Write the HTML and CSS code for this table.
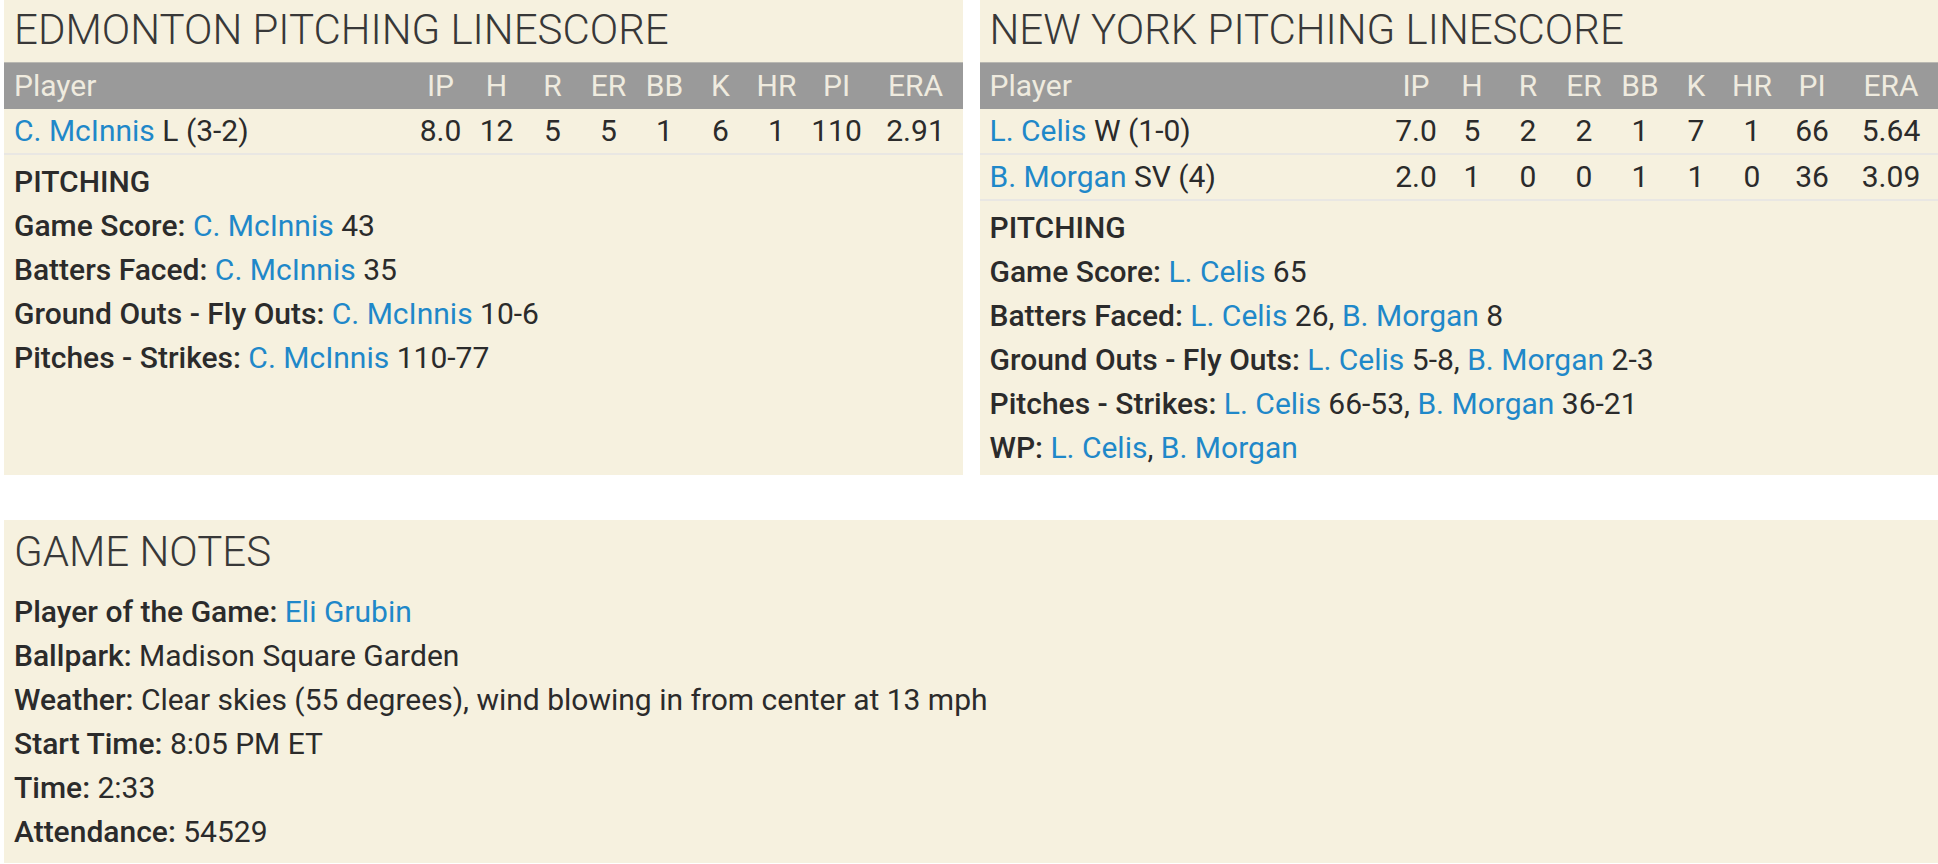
FILE: index.html
```html
<!DOCTYPE html>
<html lang="en">
<head>
    <meta charset="UTF-8">
    <meta name="viewport" content="width=device-width, initial-scale=1.0">
    <title>Box Score - Pitching</title>
    <link rel="stylesheet" href="styles.css">
</head>
<body>
    <div class="page">
        <div class="linescores">
            <section class="panel">
                <h2 class="panel-title">EDMONTON PITCHING LINESCORE</h2>
                <table class="linescore">
                    <thead>
                        <tr>
                            <th class="player">Player</th>
                            <th class="stat">IP</th>
                            <th class="stat">H</th>
                            <th class="stat">R</th>
                            <th class="stat">ER</th>
                            <th class="stat">BB</th>
                            <th class="stat">K</th>
                            <th class="stat">HR</th>
                            <th class="stat pi">PI</th>
                            <th class="stat era">ERA</th>
                        </tr>
                    </thead>
                    <tbody>
                        <tr>
                            <td class="player"><a href="#">C. McInnis</a> L (3-2)</td>
                            <td>8.0</td><td>12</td><td>5</td><td>5</td><td>1</td><td>6</td><td>1</td><td>110</td><td>2.91</td>
                        </tr>
                    </tbody>
                </table>
                <div class="details">
                    <h3>PITCHING</h3>
                    <p><b>Game Score:</b> <a href="#">C. McInnis</a> 43</p>
                    <p><b>Batters Faced:</b> <a href="#">C. McInnis</a> 35</p>
                    <p><b>Ground Outs - Fly Outs:</b> <a href="#">C. McInnis</a> 10-6</p>
                    <p><b>Pitches - Strikes:</b> <a href="#">C. McInnis</a> 110-77</p>
                </div>
            </section>

            <section class="panel">
                <h2 class="panel-title">NEW YORK PITCHING LINESCORE</h2>
                <table class="linescore">
                    <thead>
                        <tr>
                            <th class="player">Player</th>
                            <th class="stat">IP</th>
                            <th class="stat">H</th>
                            <th class="stat">R</th>
                            <th class="stat">ER</th>
                            <th class="stat">BB</th>
                            <th class="stat">K</th>
                            <th class="stat">HR</th>
                            <th class="stat pi">PI</th>
                            <th class="stat era">ERA</th>
                        </tr>
                    </thead>
                    <tbody>
                        <tr>
                            <td class="player"><a href="#">L. Celis</a> W (1-0)</td>
                            <td>7.0</td><td>5</td><td>2</td><td>2</td><td>1</td><td>7</td><td>1</td><td>66</td><td>5.64</td>
                        </tr>
                        <tr>
                            <td class="player"><a href="#">B. Morgan</a> SV (4)</td>
                            <td>2.0</td><td>1</td><td>0</td><td>0</td><td>1</td><td>1</td><td>0</td><td>36</td><td>3.09</td>
                        </tr>
                    </tbody>
                </table>
                <div class="details">
                    <h3>PITCHING</h3>
                    <p><b>Game Score:</b> <a href="#">L. Celis</a> 65</p>
                    <p><b>Batters Faced:</b> <a href="#">L. Celis</a> 26, <a href="#">B. Morgan</a> 8</p>
                    <p><b>Ground Outs - Fly Outs:</b> <a href="#">L. Celis</a> 5-8, <a href="#">B. Morgan</a> 2-3</p>
                    <p><b>Pitches - Strikes:</b> <a href="#">L. Celis</a> 66-53, <a href="#">B. Morgan</a> 36-21</p>
                    <p><b>WP:</b> <a href="#">L. Celis</a>, <a href="#">B. Morgan</a></p>
                </div>
            </section>
        </div>

        <section class="panel game-notes">
            <h2 class="panel-title">GAME NOTES</h2>
            <div class="details">
                <p><b>Player of the Game:</b> <a href="#">Eli Grubin</a></p>
                <p><b>Ballpark:</b> Madison Square Garden</p>
                <p><b>Weather:</b> Clear skies (55 degrees), wind blowing in from center at 13 mph</p>
                <p><b>Start Time:</b> 8:05 PM ET</p>
                <p><b>Time:</b> 2:33</p>
                <p><b>Attendance:</b> 54529</p>
            </div>
        </section>
    </div>
</body>
</html>
```

FILE: styles.css
```css
body {
    margin: 0;
    font-family: Roboto, "Liberation Sans", sans-serif;
    font-size: 30px;
    color: #2b2b2b;
    background-color: #fff;
}

a {
    color: #1f88c9;
    text-decoration: none;
}

b {
    font-weight: 500;
}

.page {
    padding-left: 4px;
}

.linescores {
    display: grid;
    grid-template-columns: 1fr 1fr;
    gap: 17px;
}

.panel {
    background-color: #f6f1df;
    padding-top: 4px;
}

.panel-title {
    margin: 0 0 6px;
    padding-left: 10px;
    font-size: 42px;
    font-weight: 300;
    line-height: 52px;
    color: #383838;
}

.linescore {
    width: 100%;
    border-collapse: collapse;
}

.linescore th {
    background-color: #9a9a9a;
    border-top: 1px solid #b9b8b2;
    color: #efebdf;
    font-weight: normal;
    line-height: 46px;
    padding: 0;
    text-align: center;
}

.linescore td {
    line-height: 44px;
    padding: 0;
    text-align: center;
    border-bottom: 2px solid #e9e7e3;
    white-space: nowrap;
}

.linescore .player {
    text-align: left;
    padding-left: 10px;
}

.linescore .stat {
    width: 56px;
}

.linescore .pi {
    width: 64px;
}

.linescore .era {
    width: 94px;
}

.details {
    padding: 5px 10px 5px;
}

.details h3 {
    margin: 0;
    font-size: 30px;
    font-weight: 500;
    line-height: 44px;
}

.details p {
    margin: 0;
    line-height: 44px;
}

.game-notes {
    margin-top: 45px;
    padding-top: 6px;
}

.game-notes .panel-title {
    margin-bottom: 12px;
}

.game-notes .details {
    padding-top: 0;
    padding-bottom: 9px;
}
```
